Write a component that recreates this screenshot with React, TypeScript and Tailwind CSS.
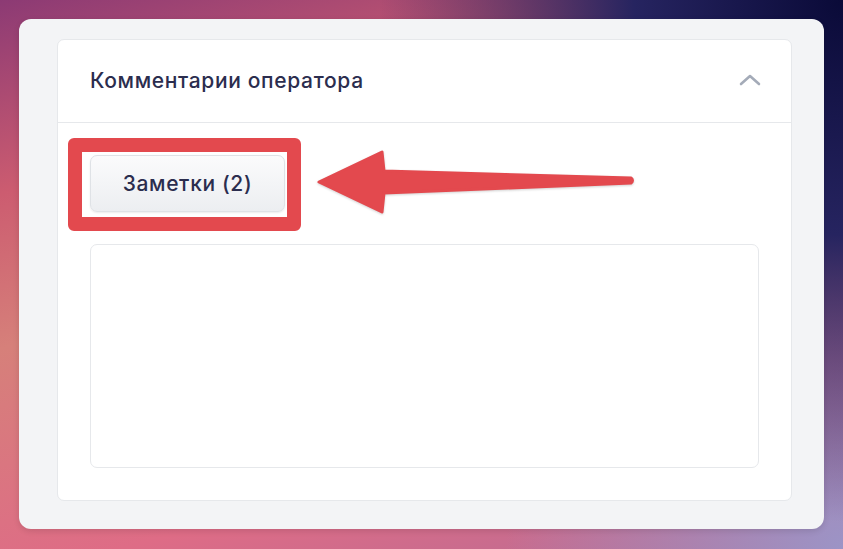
import React from "react";

const Arrow = () => (
  <svg
    width="322"
    height="70"
    viewBox="0 0 322 70"
    className="absolute left-[257px] top-[25px] drop-shadow-[0_1px_1px_rgba(0,0,0,0.18)]"
  >
    <path
      d="M4 34 L67 4 L69 23 L316 30 Q319 32.5 316 35 L69 45 L67 64 Z"
      fill="#e3494e"
      stroke="#e3494e"
      strokeWidth="3"
      strokeLinejoin="round"
    />
  </svg>
);

const App = () => {
  return (
    <div className="h-[549px] w-full bg-[radial-gradient(ellipse_55%_95%_at_100%_0%,#0a0a38_0%,#262460_45%,transparent_100%),radial-gradient(ellipse_40%_60%_at_100%_100%,#9c94c6_0%,transparent_100%),linear-gradient(165deg,#8c3a74_0%,#cc5c70_25%,#d6807a_45%,#de6c86_75%,#b46c96_100%)] pt-[19px] pr-[19px] pb-[20px] pl-[19px] font-['Inter','Noto_Sans',sans-serif]">
      <div className="h-full rounded-[12px] bg-[#f3f4f6] pt-[20px] pr-[32px] pb-[29px] pl-[38px] shadow-[0_2px_6px_rgba(0,0,0,0.12)]">
        <div className="rounded-[7px] border border-[#e6e8eb] bg-white">
          <div className="flex h-[83px] items-center justify-between border-b border-[#e6e8eb] pl-[32px] pr-[29px]">
            <h3 className="text-[21px] font-medium tracking-[0.65px] text-[#2b2d4e]">
              Комментарии оператора
            </h3>
            <svg width="24" height="14" viewBox="0 0 24 14" className="mt-[-2px]">
              <path
                d="M3 11 L12 3 L21 11"
                fill="none"
                stroke="#a4abb8"
                strokeWidth="2.6"
                strokeLinecap="round"
                strokeLinejoin="round"
              />
            </svg>
          </div>

          <div className="relative px-[32px] pt-[32px] pb-[32px]">
            <button className="h-[57px] w-[195px] rounded-[7px] border border-[#dfe2e6] bg-[linear-gradient(to_bottom,#fbfbfc,#eceef1)] text-[21px] font-medium tracking-[0.65px] text-[#2b2d4e] shadow-[0_1px_2px_rgba(0,0,0,0.08)]">
              Заметки (2)
            </button>

            <div className="mt-[32px] h-[224px] rounded-[7px] border border-[#e6e8eb] bg-white" />

            <div className="absolute left-[10px] top-[15px] h-[93px] w-[233px] rounded-[6px] border-[14px] border-[#e3494e]" />
            <Arrow />
          </div>
        </div>
      </div>
    </div>
  );
};

export default App;
